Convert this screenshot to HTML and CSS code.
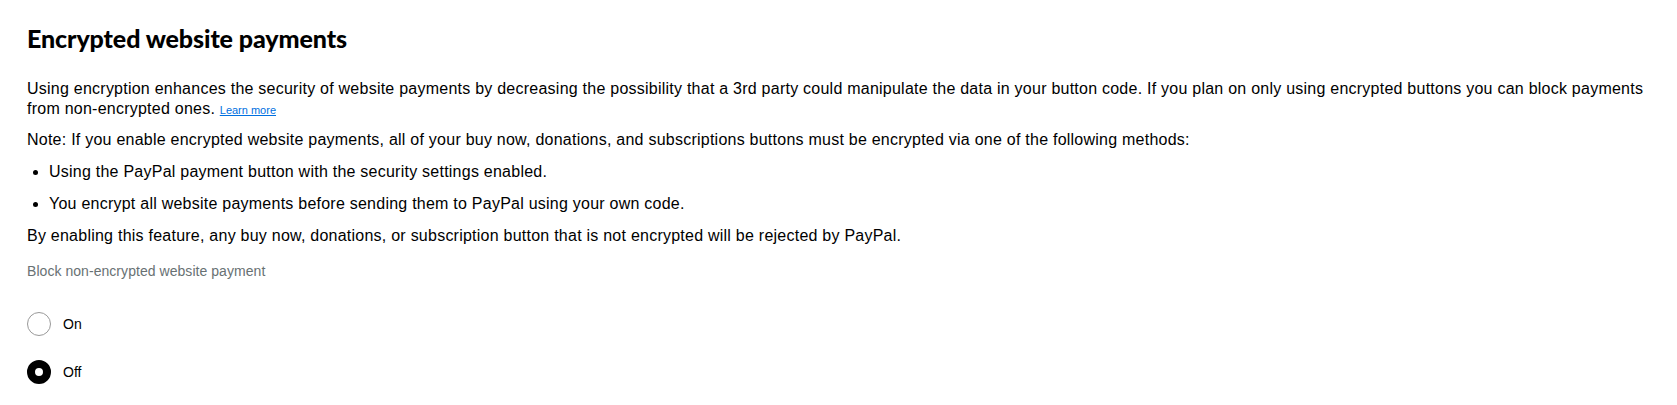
FILE: index.html
```html
<!DOCTYPE html>
<html>
<head>
  <title>Encrypted website payments</title>
  <link rel="stylesheet" href="styles.css">
</head>
<body>
  <div class="page">
    <h1>Encrypted website payments</h1>

    <p class="intro">
      Using encryption enhances the security of website payments by decreasing the possibility that a 3rd party could manipulate the data in your button code. If you plan on only using encrypted buttons you can block payments from non-encrypted ones. <a href="#" class="learn-more">Learn more</a>
    </p>

    <p class="note">Note: If you enable encrypted website payments, all of your buy now, donations, and subscriptions buttons must be encrypted via one of the following methods:</p>

    <ul class="methods">
      <li>Using the PayPal payment button with the security settings enabled.</li>
      <li>You encrypt all website payments before sending them to PayPal using your own code.</li>
    </ul>

    <p class="warning">By enabling this feature, any buy now, donations, or subscription button that is not encrypted will be rejected by PayPal.</p>

    <div class="field">
      <div class="field-label">Block non-encrypted website payment</div>
      <label class="radio-row">
        <input type="radio" name="blockPayments" value="on">
        <span>On</span>
      </label>
      <label class="radio-row">
        <input type="radio" name="blockPayments" value="off" checked>
        <span>Off</span>
      </label>
    </div>
  </div>
</body>
</html>
```

FILE: styles.css
```css
:root {
  --text-color: #000;
  --muted-color: #687173;
  --link-color: #0070e0;
  --font-size: 16px; /* body copy */
}

body {
  margin: 0;
  background-color: #fff;
  color: var(--text-color);
  font-family: "Liberation Sans", Arial, sans-serif;
}

.page {
  padding: 0 27px;
}

h1 {
  margin: 22px 0 0;
  font-family: Lato, "Liberation Sans", sans-serif;
  font-size: 25px;
  font-weight: 900;
  line-height: 32px;
  letter-spacing: -0.1px;
}

p {
  margin: 0;
  font-size: var(--font-size);
  line-height: 20px;
  letter-spacing: 0.24px;
}

.intro {
  margin-top: 25px;
}

.learn-more {
  display: inline-block;
  color: var(--link-color);
  font-size: 11px;
  line-height: 14px;
  letter-spacing: 0;
}

.note {
  margin-top: 11px;
}

.methods {
  margin: 12px 0 0;
  padding-left: 22px;
  font-size: var(--font-size);
  line-height: 20px;
  letter-spacing: 0.24px;
}

.methods li + li {
  margin-top: 12px;
}

.warning {
  margin-top: 12px;
}

.field {
  margin-top: 16px;
}

.field-label {
  color: var(--muted-color);
  font-size: 14px;
  line-height: 18px;
  letter-spacing: 0.05px;
}

.radio-row {
  display: flex;
  align-items: center;
  gap: 12px;
  height: 24px;
  margin-top: 32px;
  font-size: 14px;
}

.radio-row + .radio-row {
  margin-top: 24px;
}

.radio-row input {
  appearance: none;
  box-sizing: border-box;
  width: 24px;
  height: 24px;
  margin: 0;
  border: 1px solid #999;
  border-radius: 50%;
  background-color: #fff;
}

.radio-row input:checked {
  border: 8px solid #000;
}
```
